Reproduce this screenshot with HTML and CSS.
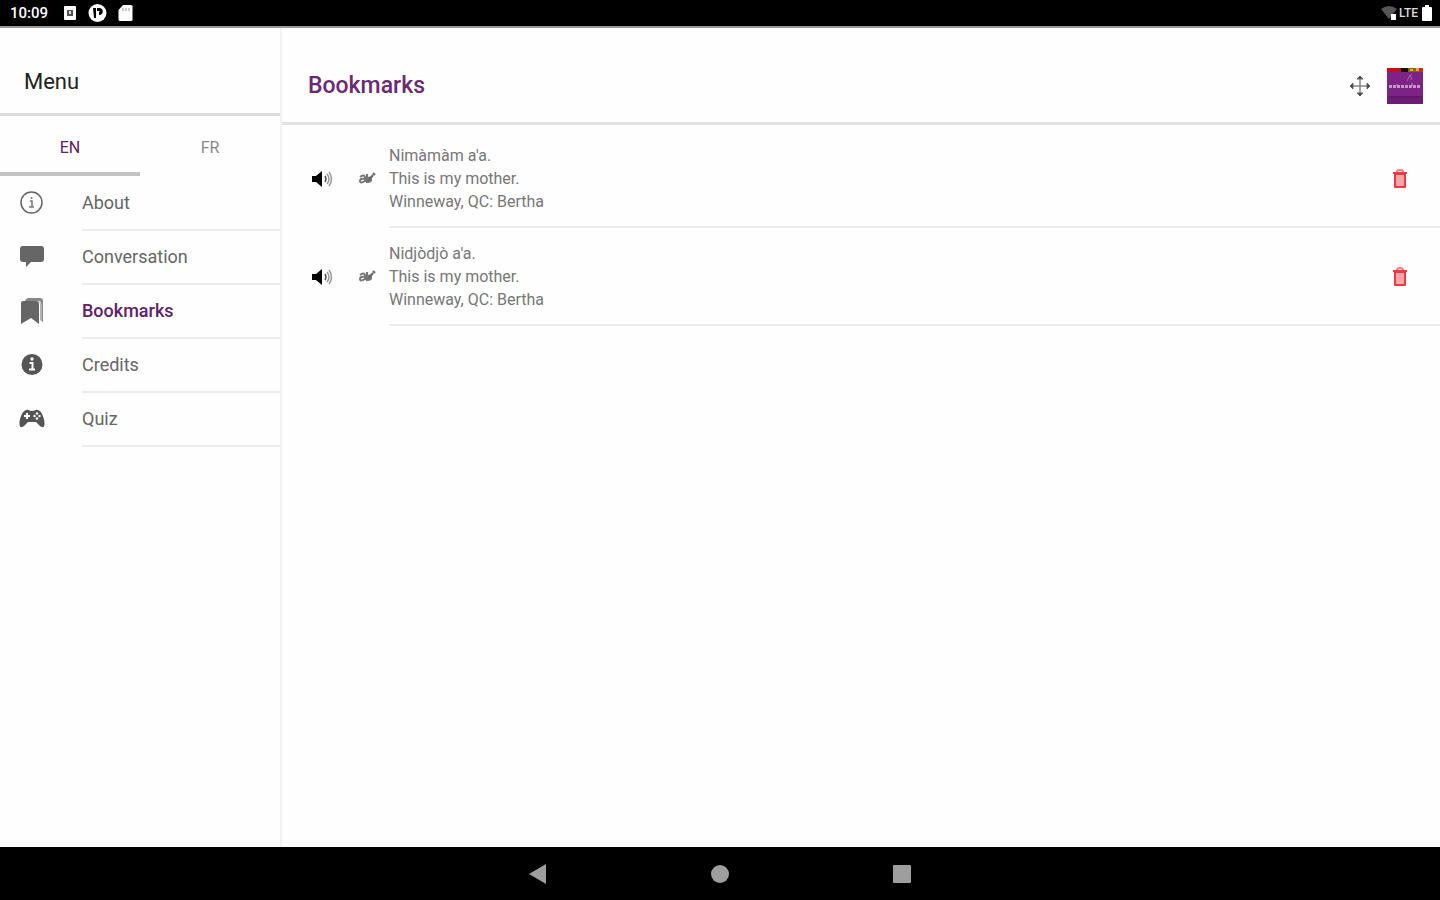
FILE: index.html
```html
<!DOCTYPE html>
<html lang="en">
<head>
    <meta charset="UTF-8">
    <title>Bookmarks</title>
    <meta name="viewport" content="width=device-width, initial-scale=1.0">
    <link rel="stylesheet" href="styles.css">
</head>
<body>
    <div class="status-bar">
        <div class="status-group">
            <span class="clock">10:09</span>
            <svg class="status-icon status-box" width="14" height="16" viewBox="0 0 14 16"><rect x="1" y="1" width="12" height="14" rx="1" fill="#fff"/><rect x="4" y="5" width="6" height="6" fill="#555"/><rect x="6" y="6" width="2" height="3" fill="#ddd"/></svg>
            <svg class="status-icon" width="19" height="18" viewBox="0 0 19 18"><circle cx="9.500" cy="9" r="9" fill="#fff"/><path d="M5 4h3v10H6zM9 4h2c5 0 5 7 0 7V8c1 0 1-1 0-1H9z" fill="#000"/></svg>
            <svg class="status-icon" width="15" height="16" viewBox="0 0 15 16"><path d="M5 0h8a1.500 1.500 0 0 1 1.500 1.500v13A1.500 1.500 0 0 1 13 16H2a1.500 1.500 0 0 1-1.500-1.500V5z" fill="#fff"/><path d="M5 3v3M8 3v3M11 3v3" stroke="#999"/></svg>
        </div>
        <div class="status-group status-right">
            <svg width="16" height="14" viewBox="0 0 16 14"><path d="M0 3Q8-3 16 3L8 13z" fill="#555"/><rect x="10" y="8" width="5" height="6" fill="#fff"/></svg>
            <span class="network">LTE</span>
            <svg width="10" height="16" viewBox="0 0 10 16"><path d="M3 0h4v2h2q1 0 1 1v12q0 1-1 1H1q-1 0-1-1V3q0-1 1-1h2z" fill="#fff"/></svg>
        </div>
    </div>

    <div class="app">
        <aside class="sidebar">
            <h2 class="menu-title">Menu</h2>
            <div class="tabs">
                <button class="tab active" type="button">EN</button>
                <button class="tab" type="button">FR</button>
            </div>
            <nav class="menu">
                <a class="menu-item" href="#about">
                    <svg class="menu-icon" viewBox="0 0 26 26"><circle cx="12.500" cy="12.500" r="10.500" fill="none" stroke="#666" stroke-width="1.500"/><path d="M11 11h2v6M10 17h5" fill="none" stroke="#777" stroke-width="1.500"/><circle cx="12.500" cy="8" r="1" fill="#777"/></svg>
                    <span class="menu-label">About</span>
                </a>
                <a class="menu-item" href="#conversation">
                    <svg class="menu-icon" viewBox="0 0 26 26"><path d="M4 2h18q3 0 3 3v10q0 3-3 3H12l-5 5v-5H4q-3 0-3-3V5q0-3 3-3z" fill="#666"/></svg>
                    <span class="menu-label">Conversation</span>
                </a>
                <a class="menu-item selected" href="#bookmarks">
                    <svg class="menu-icon" viewBox="0 0 26 26"><path d="M6 3q1-3 4-3h11q3 0 3 3v21l-3-2V6q0-3-3-3z" fill="#888"/><path d="M20 3q2 0 2 3v17" fill="none" stroke="#ddd"/><path d="M4 3h13q3 0 3 3v20l-8-6-10 6V5q0-2 2-2z" fill="#666"/></svg>
                    <span class="menu-label">Bookmarks</span>
                </a>
                <a class="menu-item" href="#credits">
                    <svg class="menu-icon" viewBox="0 0 26 26"><circle cx="13" cy="12.500" r="10.500" fill="#555"/><path d="M10.500 11h3v6M10 17.500h6" fill="none" stroke="#fff" stroke-width="2"/><circle cx="13" cy="7" r="1.700" fill="#fff"/></svg>
                    <span class="menu-label">Credits</span>
                </a>
                <a class="menu-item" href="#quiz">
                    <svg class="menu-icon" viewBox="0 0 26 26"><path d="M7 4c3-1 3 1 6 1s3-2 6-1c4 1 7 10 6.500 14.500-.5 4-3 3-5 1L17 16H9l-3.500 3.500c-2 2-4.500 3-5-1C0 14 3 5 7 4z" fill="#555"/><path d="M8 7v6M5 10h6" stroke="#fff" stroke-width="2"/><g fill="#fff"><circle cx="18" cy="7.500" r="1.200"/><circle cx="18" cy="12.500" r="1.200"/><circle cx="15.500" cy="10" r="1.200"/><circle cx="20.500" cy="10" r="1.200"/></g></svg>
                    <span class="menu-label">Quiz</span>
                </a>
            </nav>
        </aside>

        <main class="content">
            <header class="toolbar">
                <h1 class="page-title">Bookmarks</h1>
                <button class="icon-button" type="button" aria-label="Move">
                    <svg width="22" height="22" viewBox="0 0 22 22"><path d="M11 3v16M3 11h16" stroke="#888" stroke-width="1.500"/><path d="M11 1l3 3H8zM11 21l3-3H8zM1 11l3-3v6zM21 11l-3-3v6z" fill="#444" stroke="#666"/></svg>
                </button>
                <!-- App logo -->
                <svg class="logo" width="36" height="36" viewBox="0 0 36 36"><rect width="36" height="36" fill="#7d2386"/><path d="M0 0h14v4H0z" fill="#c5101b"/><path d="M14 0h7v4h-7z" fill="#180c10"/><path d="M21 0h11v4H21z" fill="#8a6418"/><path d="M23 1h3v2h-3zM29 0h3v3h-3z" fill="#d8b12a"/><path d="M32 0h4v4h-4z" fill="#c5301b"/><path d="M20 13l3-6 2 5M23 8l2-2" stroke="#a56bac" fill="none"/><path d="M2 18.500h32" stroke="#c497c9" stroke-width="3" stroke-dasharray="3 1"/><path d="M10 16v2M25 15v3" stroke="#c497c9"/><path d="M0 28h36v8H0z" fill="#6c1c75"/><path d="M3 29h30" stroke="#53155b"/></svg>
            </header>

            <ul class="bookmarks">
                <li class="bookmark">
                    <button class="icon-button" type="button" aria-label="Play">
                        <svg width="22" height="18" viewBox="0 0 22 18"><path d="M1 6h4l6-5v16l-6-5H1z" fill="#000"/><path d="M14 6q2 3 0 6" fill="none" stroke="#555" stroke-width="1.500"/><path d="M16 4q4 5 0 10M18 2q5 7 0 14" fill="none" stroke="#999" stroke-width="1.500"/></svg>
                    </button>
                    <svg class="note-icon" width="18" height="14" viewBox="0 0 18 14"><path d="M2 5q4-3 5 0v5M7 7Q2 6 2 9t5 0M9 2v8q5 0 4-3T9 7" fill="none" stroke="#777" stroke-width="2"/><path d="M10 9l5-6M15 1l2 2" fill="none" stroke="#666" stroke-width="2"/></svg>
                    <div class="bookmark-body">
                        <div class="bookmark-text">
                            <p>Nimàmàm a'a.</p>
                            <p>This is my mother.</p>
                            <p>Winneway, QC: Bertha</p>
                        </div>
                        <button class="icon-button" type="button" aria-label="Delete">
                            <svg width="16" height="20" viewBox="0 0 16 20"><path d="M3 5h10v13H3z" fill="#f9a5aa" stroke="#ee3a42" stroke-width="2" stroke-linejoin="round"/><path d="M1 4h14" fill="none" stroke="#ee3a42" stroke-width="2"/><path d="M5 3q0-2 3-2t3 2" fill="none" stroke="#f27b80" stroke-width="2"/></svg>
                        </button>
                    </div>
                </li>
                <li class="bookmark">
                    <button class="icon-button" type="button" aria-label="Play">
                        <svg width="22" height="18" viewBox="0 0 22 18"><path d="M1 6h4l6-5v16l-6-5H1z" fill="#000"/><path d="M14 6q2 3 0 6" fill="none" stroke="#555" stroke-width="1.500"/><path d="M16 4q4 5 0 10M18 2q5 7 0 14" fill="none" stroke="#999" stroke-width="1.500"/></svg>
                    </button>
                    <svg class="note-icon" width="18" height="14" viewBox="0 0 18 14"><path d="M2 5q4-3 5 0v5M7 7Q2 6 2 9t5 0M9 2v8q5 0 4-3T9 7" fill="none" stroke="#777" stroke-width="2"/><path d="M10 9l5-6M15 1l2 2" fill="none" stroke="#666" stroke-width="2"/></svg>
                    <div class="bookmark-body">
                        <div class="bookmark-text">
                            <p>Nidjòdjò a'a.</p>
                            <p>This is my mother.</p>
                            <p>Winneway, QC: Bertha</p>
                        </div>
                        <button class="icon-button" type="button" aria-label="Delete">
                            <svg width="16" height="20" viewBox="0 0 16 20"><path d="M3 5h10v13H3z" fill="#f9a5aa" stroke="#ee3a42" stroke-width="2" stroke-linejoin="round"/><path d="M1 4h14" fill="none" stroke="#ee3a42" stroke-width="2"/><path d="M5 3q0-2 3-2t3 2" fill="none" stroke="#f27b80" stroke-width="2"/></svg>
                        </button>
                    </div>
                </li>
            </ul>
        </main>
    </div>

    <div class="nav-bar">
        <button class="nav-button" type="button" aria-label="Back">
            <svg width="20" height="20" viewBox="0 0 20 20"><path d="M1 10L18 0v20z" fill="#9e9e9e"/></svg>
        </button>
        <button class="nav-button" type="button" aria-label="Home">
            <svg width="20" height="20" viewBox="0 0 20 20"><circle cx="10" cy="10" r="9" fill="#9e9e9e"/></svg>
        </button>
        <button class="nav-button" type="button" aria-label="Recent apps">
            <svg width="20" height="20" viewBox="0 0 20 20"><rect x="1" y="1" width="18" height="18" rx="1" fill="#9e9e9e"/></svg>
        </button>
    </div>
</body>
</html>
```
FILE: styles.css
```css
* {
    box-sizing: border-box;
}

body {
    font-family: Roboto, Arial, sans-serif;
    margin: 0;
    min-height: 100vh;
    display: flex;
    flex-direction: column;
    background-color: #fefefe;
    color: #666;
}

svg {
    display: block;
}

button {
    font-family: inherit;
    border: 0;
    padding: 0;
    background: none;
    cursor: pointer;
}

/* Status bar */
.status-bar {
    display: flex;
    justify-content: space-between;
    align-items: center;
    height: 28px;
    padding: 0 8px 0 10px;
    background-color: #000;
    border-bottom: 2px solid #999;
    color: #fff;
}

.status-group {
    display: flex;
    align-items: center;
    gap: 11px;
}

.status-right {
    gap: 2px;
}

.clock {
    font-size: 15px;
    font-weight: 500;
}

.status-box {
    margin-left: 4px;
}

.network {
    font-size: 12px;
    font-weight: 500;
    margin-right: 2px;
    color: #ddd;
}

.app {
    flex: 1;
    display: flex;
}

/* Side menu */
.sidebar {
    flex: 0 0 282px;
    border-right: 2px solid #f3f3f3;
}

.menu-title {
    margin: 0;
    padding: 40px 24px 17px;
    font-size: 22px;
    line-height: 28px;
    font-weight: 400;
    color: #222;
    border-bottom: 3px solid #dcdcdc;
}

.tabs {
    display: flex;
    height: 60px;
}

.tab {
    flex: 1;
    font-size: 16px;
    color: #888;
    padding-top: 6px;
    border-bottom: 4px solid transparent;
}

.tab.active {
    color: #5f2168;
    border-bottom-color: #c4c2c5;
}

.menu-item {
    display: flex;
    align-items: center;
    height: 54px;
    padding-left: 19px;
    color: #666;
    font-size: 18px;
    text-decoration: none;
}

.menu-icon {
    width: 26px;
    height: 26px;
    margin-right: 37px;
}

.menu-label {
    flex: 1;
    line-height: 52px;
    padding-top: 1px;
    border-bottom: 2px solid #ececec;
}

.menu-item.selected {
    color: #5f2168;
    font-weight: 500;
}

/* Main area */
.content {
    flex: 1;
}

.toolbar {
    display: flex;
    align-items: center;
    gap: 16px;
    padding: 36px 17px 14px 26px;
    border-bottom: 3px solid #e2e2e2;
}

.page-title {
    flex: 1;
    margin: 0;
    font-size: 23px;
    line-height: 44px;
    font-weight: 500;
    color: #6b2a75;
}

.bookmarks {
    list-style: none;
    margin: 0;
    padding: 5px 0 0 29px;
}

.bookmark {
    display: flex;
    align-items: center;
}

.note-icon {
    margin: 0 13px 0 25px;
}

.bookmark-body {
    flex: 1;
    display: flex;
    align-items: center;
    padding: 14px 32px 13px 0;
    border-bottom: 2px solid #ececec;
}

.bookmark-text {
    flex: 1;
}

.bookmark p {
    margin: 0;
    font-size: 16px;
    line-height: 23px;
    color: #777;
}

/* Android navigation */
.nav-bar {
    display: flex;
    justify-content: center;
    gap: 162px;
    height: 53px;
    background-color: #000;
}
```
